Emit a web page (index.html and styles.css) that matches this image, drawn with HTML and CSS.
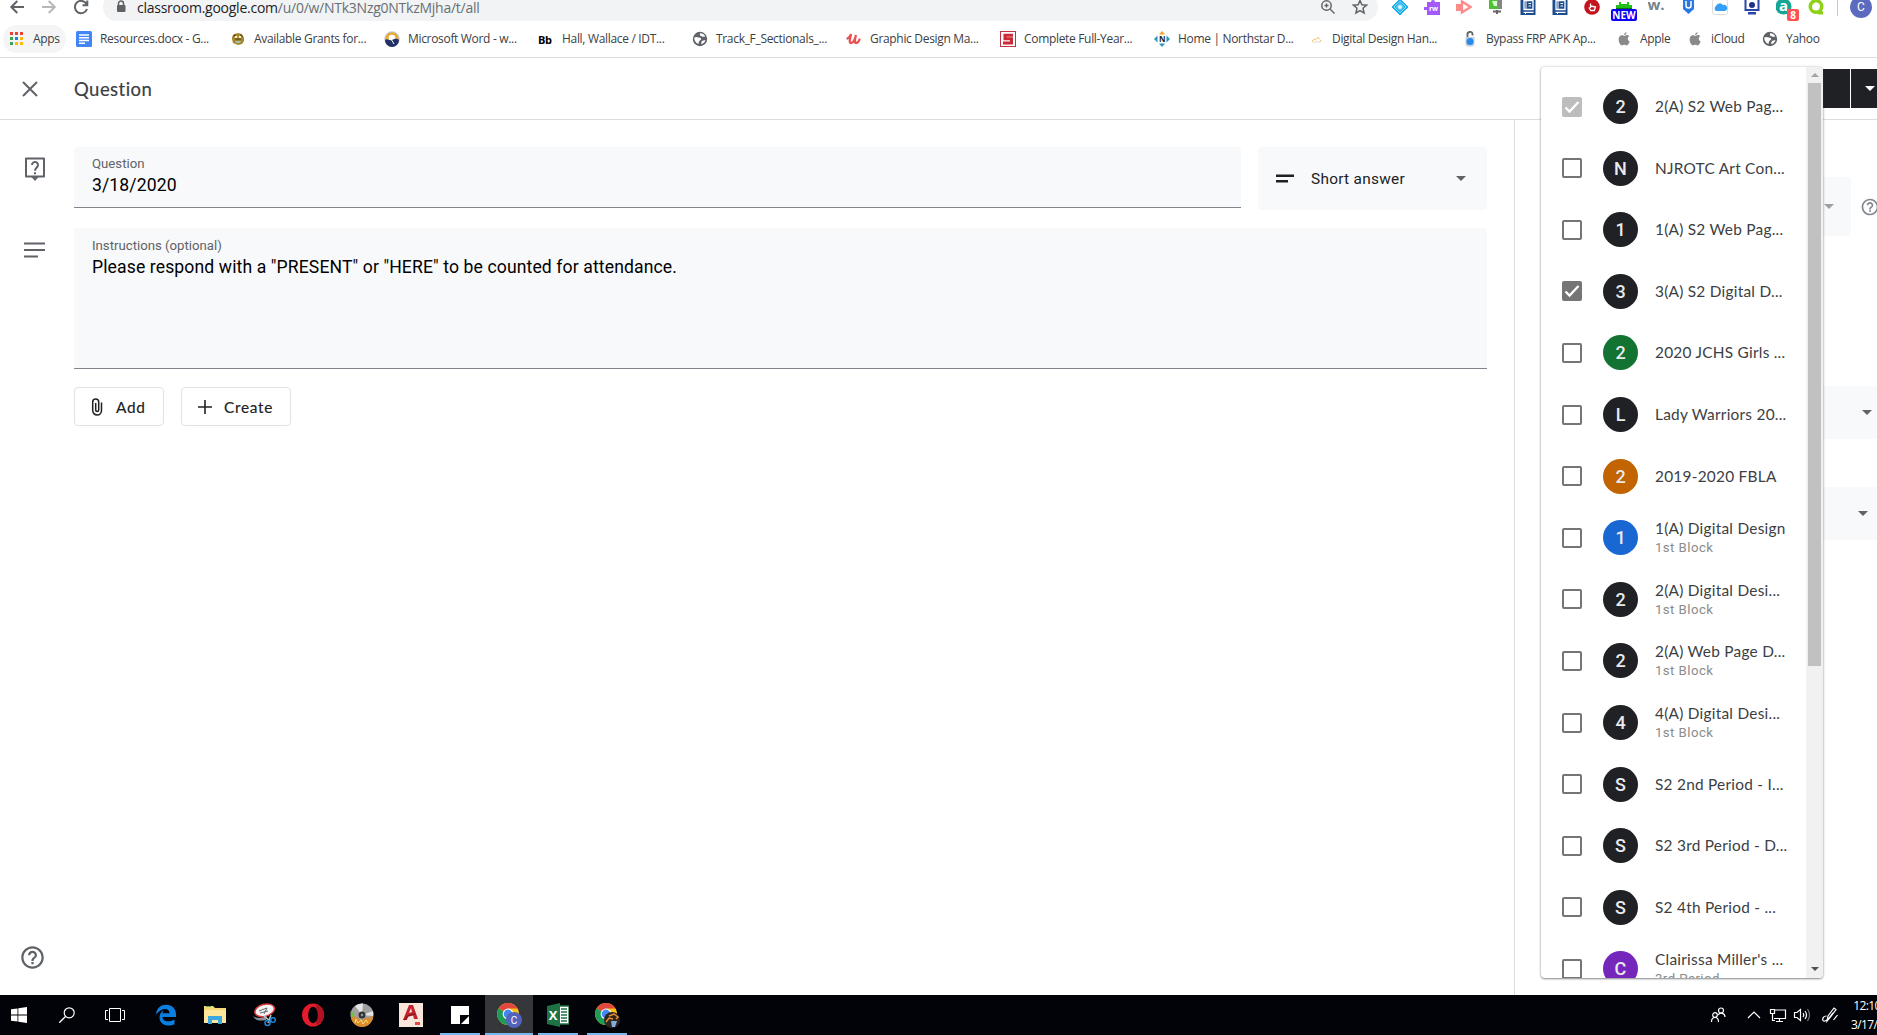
FILE: index.html
```html
<!DOCTYPE html>
<html lang="en">
<head>
  <meta charset="UTF-8">
  <meta name="viewport" content="width=device-width, initial-scale=1.0">
  <title>Question</title>
  <link rel="stylesheet" href="styles.css">
</head>
<body>

  <!-- Shared symbols -->
  <svg class="defs" width="0" height="0">
    <symbol id="globe" viewBox="0 0 16 16"><circle cx="8" cy="8" r="7.2" fill="#5f6368"/><path d="M2.300 6.500C4 5.500 5.500 6 6.500 6.500c1.500-.2 3 .5 2.500 2-.5 1-1.800 1-2 2l-.5 2.500C3.500 12 2 9 2.300 6.500zM8 2.200c-.5 1.500.2 2.800 1.700 3 1 .6 2.300.8 3.500.2C12.300 3.400 10.500 2.200 8 2.200zM10 10c1-.8 2.600-.9 3.500-.7-.6 2-2 3.200-4 3.900-.4-1.200-.3-2.500.5-3.200z" fill="#fff"/></symbol>
    <symbol id="apple" viewBox="0 0 16 16"><path d="M10.600 1.200c.1 1.500-1.200 2.800-2.600 2.800-.1-1.400 1.200-2.700 2.600-2.800zM8.200 4.900c.6 0 1.400-.8 2.700-.8 1 0 1.800.5 2.300 1.200-2.200 1.400-1.700 4.400.5 5.300-.6 1.700-1.800 3.800-3.100 3.800-.9 0-1.200-.6-2.300-.6-1.100 0-1.500.6-2.300.6C4.400 14.400 2.600 11.300 2.600 8.500c0-2.800 1.700-4.300 3.300-4.300 1.100 0 1.800.7 2.300.7z" fill="#8a8a8a"/></symbol>
    <symbol id="book" viewBox="0 0 16 16"><rect x=".5" width="15" height="16" fill="#1d4c8f"/><path d="M4 1.500h9v9H4zM3.500 13.300h10" fill="none" stroke="#fff" stroke-width="1.300"/><path d="M6 2v8.500M8.500 4.500h2.500M8.500 7h2.500M5.500 13v2" stroke="#fff"/></symbol>
    <symbol id="chrome" viewBox="0 0 24 24"><circle cx="12" cy="12" r="11" fill="#fbc116"/><path d="M12 12 2.500 6.500A11 11 0 0 1 21.500 6.500H12z" fill="#e2483d"/><path d="M2.500 6.500A11 11 0 0 0 12 23l5-8.500-5-2.500z" fill="#1e9b57"/><circle cx="12" cy="12" r="5.400" fill="#fff"/><circle cx="12" cy="12" r="4.400" fill="#4688f1"/></symbol>
    <symbol id="help" viewBox="0 0 24 24"><path d="M11 18h2v-2h-2v2zm1-16C6.480 2 2 6.480 2 12s4.480 10 10 10 10-4.480 10-10S17.520 2 12 2zm0 18c-4.410 0-8-3.590-8-8s3.590-8 8-8 8 3.590 8 8-3.590 8-8 8zm0-14c-2.210 0-4 1.790-4 4h2c0-1.100.9-2 2-2s2 .9 2 2c0 2-3 1.750-3 5h2c0-2.250 3-2.500 3-5 0-2.210-1.790-4-4-4z"/></symbol>
  </svg>

  <!-- Browser -->
  <div class="browser">
    <div class="toolbar">
      <div class="nav">
        <svg viewBox="0 0 16 16" width="16" height="16"><path d="M15 8H2.500M8.300 2 2.300 8l6 6" class="line"/></svg>
        <svg viewBox="0 0 16 16" width="16" height="16" class="dim"><path d="M1 8h12.500M7.700 2l6 6-6 6" class="line"/></svg>
        <svg viewBox="0 0 16 16" width="16" height="16"><path d="M13.500 5A6.200 6.200 0 1 0 14 10M14.300 1.500V6.300H9.500" class="line"/></svg>
      </div>
      <div class="omnibox">
        <svg viewBox="0 0 10 14" width="10" height="14"><path d="M2.500 6V3.500a2.500 2.500 0 0 1 5 0V6" fill="none" stroke="#5f6368" stroke-width="1.500"/><rect x="1" y="5" width="8.500" height="7" rx="1" fill="#5f6368"/></svg>
        <span class="url"><b>classroom.google.com</b>/u/0/w/NTk3Nzg0NTkzMjha/t/all</span>
        <svg viewBox="0 0 16 16" width="16" height="16"><circle cx="6.500" cy="6.500" r="4.700" fill="none" stroke="#5f6368" stroke-width="1.500"/><path d="M10 10l4.500 4.500M6.500 4.500v4M4.500 6.500h4" stroke="#5f6368" stroke-width="1.400"/></svg>
        <svg viewBox="0 0 16 16" width="16" height="16"><path d="M8 1.500l1.900 4.300 4.700.4-3.600 3.100 1.100 4.600L8 11.500l-4.100 2.400L5 9.300 1.400 6.200l4.700-.4z" fill="none" stroke="#5f6368" stroke-width="1.500"/></svg>
      </div>
      <div class="extensions">
        <svg viewBox="0 0 16 16"><path d="M8 0l8 8-8 8-8-8z" fill="#18aeea" stroke="#18aeea" stroke-linejoin="round"/><path d="M8 2 14 8 8 14 2 8zM8 4.500 11.500 8 8 11.500 4.500 8z" fill="none" stroke="#a8e4fa" stroke-width=".8"/><circle cx="8" cy="8" r="2" fill="#e4f7ff"/></svg>
        <svg viewBox="0 0 16 16"><path d="M3 3h4a2 2 0 1 1 4 0h5v13H3v-5H0V8h3z" fill="#a259f7"/><text x="9.500" y="12" class="g7">rw</text></svg>
        <svg viewBox="0 0 16 16"><path d="M0 5h5v7H0z" fill="#ff8a8a"/><path d="M6 2.500 14.500 8 6 13.500z" fill="none" stroke="#ff8a8a" stroke-width="2.300"/></svg>
        <svg viewBox="0 0 16 16"><path d="M10 0h4v10h-4z" fill="#858585"/><path d="M1 1h9v9H1z" fill="#4fc231"/><path d="M4 2h5v5H6z" fill="#d8ffcf"/><path d="M9 11v4M5 12.500h8" stroke="#666" stroke-width="2"/></svg>
        <svg><use href="#book"/></svg>
        <svg><use href="#book"/></svg>
        <svg viewBox="0 0 16 16"><circle cx="8" cy="8" r="7.800" fill="#c4121f"/><path d="M6.500 9V4.500M4.800 8.500l2 3h3.500l1.200-3.500-4.500-1" fill="none" stroke="#fff" stroke-width="1.300"/></svg>
        <span class="ext"><svg viewBox="0 0 16 16"><path d="M0 6h16v4H0zM3 3h10v4H3z" fill="#20c018"/><path d="M5 3h6v2H5z" fill="#fff"/><path d="M0 9.500h16" stroke="#126c12"/></svg><em class="badge-new">NEW</em></span>
        <svg viewBox="0 0 16 16"><text x="8" y="11" class="wdot">w.</text></svg>
        <svg viewBox="0 0 16 16"><path d="M3 0h11v10l-5.500 5L3 10z" fill="#2879e5"/><path d="M6 2v4.500a2.500 2.500 0 0 0 5 0V2" fill="none" stroke="#fff" stroke-width="1.500"/></svg>
        <svg viewBox="0 0 16 16"><rect x=".5" y=".5" width="15" height="15" rx="2" fill="#fff" stroke="#ddd"/><path d="M4 12a3 3 0 0 1 0-5 4 4 0 0 1 7-1 3 3 0 0 1 2 6z" fill="#35a0f5"/></svg>
        <svg viewBox="0 0 16 16"><path d="M1.500 0h13v11h-13z" fill="#fff" stroke="#2c45a8" stroke-width="2"/><circle cx="8" cy="6" r="3" fill="#1f318b"/><path d="M4 13h8v2.500H4z" fill="#2c45a8"/></svg>
        <span class="ext"><svg viewBox="0 0 16 16"><circle cx="7.500" cy="7.500" r="8" fill="#15a594"/><text x="7.500" y="12" class="asmall">a</text></svg><em class="badge-red">8</em></span>
        <svg viewBox="0 0 16 16"><circle cx="8" cy="7.500" r="5.700" fill="none" stroke="#8fd119" stroke-width="3.600"/><path d="M10 12h5v3.500h-5z" fill="#8fd119"/></svg>
        <i class="divider"></i>
        <span class="profile">C</span>
      </div>
    </div>

    <div class="bookmarks">
      <div class="apps">
        <svg viewBox="0 0 14 14" width="14" height="14"><path d="M0 0h3v3H0zM5 0h3v3H5zM10 0h3v3h-3z" fill="#ea4335"/><path d="M0 5h3v3H0zM0 10h3v3H0z" fill="#34a853"/><path d="M5 5h3v3H5z" fill="#1a82e8"/><path d="M10 5h3v3h-3zM5 10h3v3H5zM10 10h3v3h-3z" fill="#fbbc04"/></svg>
        <span>Apps</span>
      </div>
      <div class="bookmark"><svg viewBox="0 0 16 16"><rect width="16" height="16" rx="1.500" fill="#4285f4"/><path d="M3 4h10M3 6.800h10M3 9.500h10M3 12.200h6" stroke="#fff" stroke-width="1.400"/></svg><span>Resources.docx - G...</span></div>
      <div class="bookmark"><svg viewBox="0 0 16 16"><path d="M2 6l2-3 4-1 4 1 2 4 0 3-2 3-4 1-5-2-1-4z" fill="#a5852d"/><circle cx="6" cy="6" r="1.300" fill="#fff3b5"/><circle cx="10" cy="6" r="1.300" fill="#fff3b5"/><path d="M5 10h6l-1 2H6z" fill="#9bc5a5"/><path d="M3 5l3-1M10 4l3 2M5 8h6" stroke="#4c3914"/></svg><span>Available Grants for...</span></div>
      <div class="bookmark"><svg viewBox="0 0 16 16"><circle cx="8" cy="8" r="7.200" fill="#e5ac38" stroke="#c3c6d9"/><circle cx="8" cy="7" r="3.300" fill="#fff"/><path d="M1 9c2-2 4 1 7 0s4-2 7 0a7 7 0 0 1-14 0z" fill="#213069"/><path d="M7 8l3 5" stroke="#fff"/></svg><span>Microsoft Word - w...</span></div>
      <div class="bookmark"><i class="bb">Bb</i><span>Hall, Wallace / IDT...</span></div>
      <div class="bookmark"><svg><use href="#globe"/></svg><span>Track_F_Sectionals_...</span></div>
      <div class="bookmark"><svg viewBox="0 0 16 16"><path d="M1.500 7.500C4 6 5 3 5 3c-.5 3-2.500 9 0 9 3 0 5-8 5-8s-2.500 8 0 8c1.500 0 3-2 3.500-3.500" fill="none" stroke="#ec5252" stroke-width="2.300" stroke-linecap="round"/></svg><span>Graphic Design Ma...</span></div>
      <div class="bookmark"><svg viewBox="0 0 16 16"><rect x=".5" y=".5" width="15" height="15" fill="#fff" stroke="#bd3542"/><path d="M13 4.200H5v3.600h6.500v4.200H3" fill="none" stroke="#cc2936" stroke-width="3"/></svg><span>Complete Full-Year...</span></div>
      <div class="bookmark"><svg viewBox="0 0 16 16"><path d="M5 3.500 8 0l3 3.500z" fill="#f6a01c"/><path d="M5 12.500 8 16l3-3.500zM3.500 4.500v7L0 8zM12.500 4.500v7L16 8z" fill="#2598b7"/><text x="8" y="11.300" class="north">N</text></svg><span>Home | Northstar D...</span></div>
      <div class="bookmark"><svg viewBox="0 0 16 16"><path d="M4 10l2-2 2 1 2-3 3 4" fill="none" stroke="#f3b14a" stroke-dasharray="2 1"/><path d="M4 11h9" stroke="#dfd9c5"/></svg><span>Digital Design Han...</span></div>
      <div class="bookmark"><svg viewBox="0 0 16 16"><path d="M5.500 7V4a2.500 2.500 0 0 1 5-1V4.500" fill="none" stroke="#606366" stroke-width="1.800"/><path d="M3.500 6h9v8l-2 1.500h-5l-2-1.500z" fill="#c7cfd7"/><circle cx="8" cy="10.500" r="3.500" fill="#258bea"/></svg><span>Bypass FRP APK Ap...</span></div>
      <div class="bookmark short"><svg><use href="#apple"/></svg><span>Apple</span></div>
      <div class="bookmark icloud"><svg><use href="#apple"/></svg><span>iCloud</span></div>
      <div class="bookmark short"><svg><use href="#globe"/></svg><span>Yahoo</span></div>
    </div>
  </div>

  <!-- Header -->
  <header>
    <svg viewBox="0 0 16 16" width="16" height="16"><path d="M1 1l14 14M15 1 1 15" stroke="#5f6368" stroke-width="2"/></svg>
    <h1>Question</h1>
    <div class="ask"><span class="ask-main"></span><span class="ask-more"><i class="arrow white"></i></span></div>
  </header>

  <main>
    <!-- Question form -->
    <section class="editor">
      <div class="row">
        <svg class="row-icon tall" viewBox="0 0 24 26" width="24" height="26"><path d="M3 2.500h18v18H3z" fill="none" stroke="#5f6368" stroke-width="2" stroke-linejoin="round"/><path d="M8.500 21h7L12 25z" fill="#5f6368"/><path d="M9 9a3 3 0 1 1 5.200 2C13 12.300 12 12.800 12 14.800M12 16.200v2" fill="none" stroke="#5f6368" stroke-width="2"/></svg>
        <div class="field title">
          <label>Question</label>
          <p>3/18/2020</p>
        </div>
        <div class="type">
          <svg viewBox="0 0 18 10" width="18" height="10"><path d="M0 1.800h18M0 7.300h12" stroke="#202124" stroke-width="2.400"/></svg>
          <span>Short answer</span>
          <i class="arrow"></i>
        </div>
      </div>
      <div class="row">
        <svg class="row-icon" viewBox="0 0 22 16" width="22" height="16"><path d="M1 1.500h21M1 8h21M1 14.500h14" stroke="#5f6368" stroke-width="2.200"/></svg>
        <div class="field instructions">
          <label>Instructions (optional)</label>
          <p>Please respond with a "PRESENT" or "HERE" to be counted for attendance.</p>
        </div>
      </div>
      <div class="actions">
        <button class="btn"><svg viewBox="0 0 12 18" width="12" height="18"><path d="M10.500 4.500v8a4.400 4.400 0 0 1-8.800 0V4a3 3 0 0 1 6 0v8a1.500 1.500 0 0 1-3 0V5" fill="none" stroke="#202124" stroke-width="1.500"/></svg>Add</button>
        <button class="btn create"><svg viewBox="0 0 14 14" width="14" height="14"><path d="M7 0v14M0 7h14" stroke="#202124" stroke-width="1.600"/></svg>Create</button>
      </div>
      <svg class="help" width="27" height="27"><use href="#help"/></svg>
    </section>

    <!-- Settings column, mostly behind the class menu -->
    <aside>
      <div class="setting-row"><div class="setting first"><i class="arrow light"></i></div><svg class="hint" width="20" height="20"><use href="#help"/></svg></div>
      <div class="setting points"><i class="arrow"></i></div>
      <div class="setting due"><i class="arrow"></i></div>
    </aside>
  </main>

  <!-- Class menu -->
  <div class="menu">
    <ul id="classes"></ul>
    <div class="scrollbar"><i class="up"></i><div class="thumb"></div><i class="down"></i></div>
  </div>

  <!-- Taskbar -->
  <footer>
    <div class="tasks">
      <div><svg viewBox="0 0 16 16" width="16" height="16"><path d="M0 2.300 6.500 1.400v6.200H0zM7.300 1.200 16 0v7.600H7.300zM0 8.400h6.500v6.200L0 13.700zM7.300 8.400H16V16l-8.700-1.200z" fill="#fff"/></svg></div>
      <i></i>
      <div><svg viewBox="0 0 16 16" width="16" height="16"><circle cx="10.200" cy="5.800" r="5" fill="none" stroke="#fff" stroke-width="1.200"/><path d="M6.500 9.500.3 15.700" stroke="#fff" stroke-width="1.300"/></svg></div>
      <div><svg viewBox="0 0 20 14" width="20" height="14"><path d="M4.500.5h11v13h-11zM3 2.500H.5v9H3M17 2.500h2.500v9H17" fill="none" stroke="#fff"/></svg></div>
      <i></i>
      <div><svg viewBox="0 0 22 22" width="22" height="22"><path d="M1 10.500C1.500 4 6 .8 11 .8c6 0 10 4 10 9.600V13H7.500c0 5 7 5.500 12 2.500v4.700c-5.500 2.500-15 1.700-15-7 0-3.200 1.800-5.700 4.500-7.200C8 7 7.600 8.200 7.500 9.200h7C14.500 3 6 3.500 1 10.500z" fill="#0b7fe0"/></svg></div>
      <div><svg viewBox="0 0 22 20" width="22" height="20"><path d="M0 1h9l2 2h11v15H0z" fill="#f8d775"/><path d="M2 1h5v1H2z" fill="#4db35d"/><path d="M0 5h22v13H0z" fill="#fde699"/><path d="M4 19v-8h14v8h-4v-4H8v4z" fill="#3ba9e0"/></svg></div>
      <div><svg viewBox="0 0 24 24" width="24" height="24"><path d="M1 13c3 3 10 2 14 0l-1 4c-5 1-11 1-13-4z" fill="#8c9196"/><ellipse cx="12.800" cy="7.500" rx="10" ry="6" transform="rotate(-15 12 8)" fill="#f5f5f5" stroke="#d93a3a" stroke-width="1.500"/><path d="M7 8l8-3-3 6M8 10l8-2" fill="none" stroke="#666"/><path d="M12 13l7 6M19 12l-3 8" stroke="#b9c7d0" stroke-width="1.500"/><circle cx="15.500" cy="20" r="2.500" fill="none" stroke="#2084d4" stroke-width="1.500"/><circle cx="21" cy="17" r="2.300" fill="none" stroke="#2084d4" stroke-width="1.500"/></svg></div>
      <div><svg viewBox="0 0 24 24" width="24" height="24"><ellipse cx="12" cy="12" rx="11" ry="11.500" fill="#e31b2b"/><path d="M15 2c11 4 11 16 0 20z" fill="#b01220"/><ellipse cx="12" cy="12" rx="4.800" ry="8.300" fill="#010308"/></svg></div>
      <div><svg viewBox="0 0 24 24" width="24" height="24"><circle cx="12" cy="12" r="11.500" fill="#a0a0a0"/><path d="M12 12 5 3a12 12 0 0 1 8-2.500zM12 12l11-4a12 12 0 0 1 0 5z" fill="#e4e4e4"/><path d="M1 13c3 2 3-1 5 1s3 2 6 3c3 0 3-3 5-2s4-2 6-2a11 11 0 0 1-22 0z" fill="#d98d2c"/><path d="M5 20l1-4 2 4 3-3 2 4 3-4 2 3" fill="none" stroke="#ffe27a"/><path d="M.5 8l4 3-3 4z" fill="#69c62b"/><circle cx="12" cy="12" r="3.500" fill="#353535"/><circle cx="12" cy="12" r="1.200" fill="#999"/></svg></div>
      <div><svg viewBox="0 0 24 24" width="24" height="24"><path d="M0 0h24v24H0z" fill="#fae5dd"/><path d="M4 17 10 2h4l5 14h-4l-1-4-5 1-1 4z" fill="#c2242c"/><path d="M10 10l2-5 1 4z" fill="#fae5dd"/><path d="M5 17l4-4 7-2" fill="none" stroke="#8e1018" stroke-width="1.500"/><path d="M16 19h5v3h-5z" fill="#e44747"/></svg></div>
      <div class="running"><svg viewBox="0 0 18 18" width="18" height="18"><path d="M0 0h18v9h-9v9H0z" fill="#fff"/><path d="M18 9v9H9z" fill="#02040a"/><path d="M10 18h8v-8z" fill="#fff"/><path d="M9 9h9l-9 9z" fill="#02040a"/></svg></div>
      <div class="running current"><svg viewBox="0 0 26 26" width="26" height="26"><use href="#chrome" width="24" height="24"/><circle cx="18" cy="18" r="8" fill="#5363bb"/><text x="18" y="21.500" class="chromec">C</text></svg></div>
      <div class="running"><svg viewBox="0 0 22 24" width="22" height="24"><path d="M11 3h11v18H11z" fill="#fff" stroke="#1f7244" stroke-width="1.300"/><path d="M14 6h6M14 9h6M14 12h6M14 15h6M14 18h6" stroke="#1f7244" stroke-width="1.700"/><path d="M0 3 13 0v24L0 21z" fill="#1f7244"/><text x="6.200" y="16.500" class="excel">X</text></svg></div>
      <div class="running"><svg viewBox="0 0 26 26" width="26" height="26"><use href="#chrome" width="24" height="24"/><circle cx="18" cy="18" r="8" fill="#2c2622"/><path d="M15 14l5-2 4 3-2 2M12 20l3-4 4 1" fill="none" stroke="#e88d31" stroke-width="1.500"/><path d="M17 19h6l-2 6h-3z" fill="#86abd8"/></svg></div>
    </div>
    <div class="tray">
      <svg viewBox="0 0 16 16"><circle cx="11" cy="3.500" r="2.500"/><circle cx="5" cy="8" r="2.300"/><path d="M1.500 15c0-6 7-6 7 0M8 8c2-3 7-2 7 2"/></svg>
      <svg viewBox="0 0 16 16" class="caret"><path d="M2 11l6-6 6 6"/></svg>
      <svg viewBox="0 0 16 16"><path d="M4 3h11.500v8.500H4M9.500 11.500V14M6 14.500h7M.5 2.500h4v4h-4zM2.500 6.500v7H5"/></svg>
      <svg viewBox="0 0 16 16" class="speaker"><path d="M.5 5.500H3l3.500-3v11L3 10.500H.5zM9 6q1.500 2 0 4M11 4q3 4 0 8"/><path d="M13.500 2q4 6 0 12" opacity=".45"/></svg>
      <svg viewBox="0 0 16 16"><path d="M5 14 6 9l6-8 2 1.500-6 8zM4.500 9C0 9-.5 15 3 14c4-1 5-5 8-8M15.500 8l-4 5"/></svg>
      <div class="clock">12:10 PM<br>3/17/2020</div>
    </div>
  </footer>

  <script>
    const classes = [
      ["2", "2(A) S2 Web Pag...", "", "#202124", "locked"],
      ["N", "NJROTC Art Con..."],
      ["1", "1(A) S2 Web Pag..."],
      ["3", "3(A) S2 Digital D...", "", "#202124", "checked"],
      ["2", "2020 JCHS Girls ...", "", "#137333"],
      ["L", "Lady Warriors 20..."],
      ["2", "2019-2020 FBLA", "", "#c26401"],
      ["1", "1(A) Digital Design", "1st Block", "#1967d2"],
      ["2", "2(A) Digital Desi...", "1st Block"],
      ["2", "2(A) Web Page D...", "1st Block"],
      ["4", "4(A) Digital Desi...", "1st Block"],
      ["S", "S2 2nd Period - I..."],
      ["S", "S2 3rd Period - D..."],
      ["S", "S2 4th Period - ..."],
      ["C", "Clairissa Miller's ...", "3rd Period", "#7627bb"]
    ];

    const tick = '<svg viewBox="0 0 20 20"><path d="M3.500 10.500l4 4 9-9.500" fill="none" stroke="#fff" stroke-width="2.300"/></svg>';

    document.getElementById('classes').innerHTML = classes.map(([letter, name, section, color, state]) => `
      <li>
        <span class="check ${state || ''}">${state ? tick : ''}</span>
        <span class="avatar" style="background:${color || '#202124'}">${letter}</span>
        <div class="name">${name}${section ? `<small>${section}</small>` : ''}</div>
      </li>`).join('');
  </script>

</body>
</html>
```

FILE: styles.css
```css
* { margin: 0; padding: 0; box-sizing: border-box; }

body {
  width: 1877px;
  height: 1035px;
  overflow: hidden;
  display: flex;
  flex-direction: column;
  position: relative;
  background: #fff;
  color: #202124;
  font-family: Roboto, sans-serif;
}

svg { flex: none; display: block; }
.defs { position: absolute; }

/* Browser */
.browser {
  height: 58px;
  flex: none;
  overflow: hidden;
  border-bottom: 1px solid #dadcde;
  font-family: "Open Sans", sans-serif;
}

.toolbar {
  height: 28px;
  margin-top: -7px;
  display: flex;
  align-items: center;
}

.nav {
  width: 103px;
  padding-left: 9px;
  display: flex;
  gap: 16px;
}

.line { fill: none; stroke: #5f6368; stroke-width: 2; }
.dim { opacity: .45; }

.omnibox {
  width: 1275px;
  height: 28px;
  padding: 0 10px 0 13px;
  border-radius: 14px;
  background: #f1f3f4;
  display: flex;
  align-items: center;
  gap: 16px;
}

.omnibox > svg:first-child { margin-right: -5px; }

.url {
  flex: 1;
  font-size: 14px;
  letter-spacing: -.25px;
  color: #6b6f73;
}

.url b { font-weight: 400; color: #202124; }

.extensions {
  display: flex;
  align-items: center;
  gap: 16px;
  padding-left: 14px;
}

.extensions svg { width: 16px; height: 16px; }
.ext { position: relative; }

.badge-new, .badge-red {
  position: absolute;
  font: bold 10px/12px "Open Sans", sans-serif;
  color: #fff;
  text-align: center;
  border-radius: 2px;
}

.badge-new { left: -5px; top: 10px; width: 26px; background: #0b00f5; }
.badge-red { left: 11px; top: 10px; width: 12px; background: #ff5252; }

.g7 { font: bold 7px "Open Sans", sans-serif; fill: #fff; text-anchor: middle; }
.wdot { font: bold 15px "Open Sans", sans-serif; fill: #74838c; text-anchor: middle; }
.asmall { font: bold 15px "Open Sans", sans-serif; fill: #fff; text-anchor: middle; }
.north { font: bold 8px "Open Sans", sans-serif; fill: #222; text-anchor: middle; }

.divider { width: 1px; height: 18px; background: #c8c9cc; margin-left: -3px; }

.profile {
  width: 22px;
  height: 22px;
  border-radius: 50%;
  background: #5c6bc0;
  color: #fff;
  font: 12px/22px Roboto, sans-serif;
  text-align: center;
  margin-left: -4px;
}

.bookmarks {
  height: 36px;
  display: flex;
  align-items: center;
  padding-left: 3px;
  font-size: 12px;
  letter-spacing: -.32px;
  color: #3c4043;
}

.bookmarks span { margin-top: -1px; }

.apps {
  width: 63px;
  height: 28px;
  margin-right: 10px;
  padding-left: 7px;
  border-radius: 14px;
  background: #f5f5f5;
  display: flex;
  align-items: center;
  gap: 9px;
}

.bookmark {
  width: 154px;
  display: flex;
  align-items: center;
  gap: 8px;
  white-space: nowrap;
}

.bookmark svg { width: 16px; height: 16px; }
.bookmark.short { width: 71px; }
.bookmark.icloud { width: 75px; }

.bb {
  width: 16px;
  font: bold 11px "Open Sans", sans-serif;
  letter-spacing: -.3px;
  color: #000;
}

/* Header */
header {
  height: 62px;
  flex: none;
  display: flex;
  align-items: center;
  padding-left: 22px;
  border-bottom: 1px solid #dadce0;
}

h1 {
  flex: 1;
  margin-left: 36px;
  font: 400 18.5px Lato, sans-serif;
  letter-spacing: .45px;
  color: #3c4043;
  -webkit-text-stroke: .2px #3c4043;
}

.ask { display: flex; gap: 1px; height: 39px; }
.ask-main { width: 120px; background: #202124; }

.ask-more {
  width: 26px;
  padding-left: 14px;
  background: #202124;
  display: flex;
  align-items: center;
}

.arrow {
  flex: none;
  border: 5.5px solid transparent;
  border-top-color: #5f6368;
  border-bottom: 0;
}

.arrow.white { border-top-color: #fff; }
.arrow.light { border-top-color: #9aa0a6; }

/* Question form */
main { flex: 1; display: flex; min-height: 0; }

.editor {
  flex: none;
  width: 1514px;
  padding: 27px 27px 24px 0;
  display: flex;
  flex-direction: column;
}

.row { display: flex; margin-bottom: 18px; }
.row-icon { width: 22px; margin: 14px 29px 0 23px; }
.row-icon.tall { width: 24px; margin: 9px 27px 0 23px; }

.field {
  flex: 1;
  padding: 9px 18px 0;
  background: #f8f9fa;
  border-radius: 4px 4px 0 0;
  border-bottom: 1px solid #80868b;
}

.field.title { height: 61px; margin-right: 17px; }
.field.instructions { height: 141px; padding-top: 10px; }

.field label {
  display: block;
  font-size: 13.2px;
  line-height: 16px;
  color: #5f6368;
}

.field p {
  padding-top: 1px;
  font-size: 17.6px;
  line-height: 24px;
  letter-spacing: .11px;
  color: #000;
}

.type {
  width: 229px;
  height: 63px;
  padding: 0 21px 0 18px;
  border-radius: 4px;
  background: #f8f9fa;
  display: flex;
  align-items: center;
  font-size: 15.4px;
  letter-spacing: .28px;
}

.type span { flex: 1; margin-left: 17px; }

.actions {
  display: flex;
  gap: 17px;
  padding-left: 74px;
}

.btn {
  width: 90px;
  height: 39px;
  padding-left: 16px;
  border: 1px solid #e0e2e5;
  border-radius: 4px;
  background: #fff;
  color: #202124;
  display: flex;
  align-items: center;
  gap: 13px;
  font: 15.4px Lato, sans-serif;
  letter-spacing: .7px;
  -webkit-text-stroke: .15px #202124;
}

.btn.create { width: 110px; gap: 12px; }

.help { margin: auto 0 0 19px; fill: #5f6368; }

/* Settings */
aside {
  flex: 1;
  min-width: 0;
  border-left: 1px solid #dadce0;
  padding: 57px 0 0 26px;
}

.setting-row { display: flex; align-items: center; gap: 9px; }

.setting {
  flex: none;
  background: #f8f9fa;
  display: flex;
  align-items: center;
  justify-content: flex-end;
  height: 53px;
}

.setting.first { width: 310px; height: 59px; padding-right: 17px; border-radius: 4px; }
.setting.points { margin-top: 150px; padding-right: 5px; }
.setting.due { margin-top: 48px; padding-right: 9px; }
.hint { fill: #80868b; }

/* Class menu */
.menu {
  position: absolute;
  left: 1541px;
  top: 67px;
  width: 282px;
  height: 911px;
  display: flex;
  overflow: hidden;
  background: #fff;
  border-radius: 4px;
  box-shadow: 0 1px 2px rgba(60,64,67,.55), 0 0 3px rgba(60,64,67,.25);
}

.menu ul {
  flex: 1;
  list-style: none;
  padding-top: 8.8px;
}

.menu li {
  height: 61.6px;
  padding-left: 21px;
  display: flex;
  align-items: center;
}

.check {
  width: 20px;
  height: 20px;
  border: 2px solid #757575;
  border-radius: 2px;
}

.check.checked { background: #757575; border: 0; }
.check.locked { background: #bdbdbd; border: 0; }

.avatar {
  width: 35px;
  height: 35px;
  margin: 0 17px 0 21px;
  border-radius: 50%;
  color: #e8eaed;
  font: 500 18px/35px Roboto, sans-serif;
  text-align: center;
}

.name {
  margin-top: -1px;
  font: 15.4px/20px Lato, sans-serif;
  letter-spacing: .25px;
  color: #3c4043;
  white-space: nowrap;
}

.name small {
  display: block;
  font: 13.2px/20px Roboto, sans-serif;
  letter-spacing: .45px;
  color: #8b8b8b;
}

.name:has(small) { margin-top: 1px; }

.scrollbar {
  width: 17px;
  background: #f1f1f1;
  display: flex;
  flex-direction: column;
  align-items: center;
}

.scrollbar i { border: 4px solid transparent; }
.scrollbar .up { margin: 6px 0; border-top-width: 0; border-bottom-color: #a3a3a3; }
.scrollbar .down { margin: auto 0 7px; border-bottom-width: 0; border-top-color: #505050; }
.thumb { width: 13px; height: 583px; background: #c1c1c1; }

/* Taskbar */
footer {
  height: 40px;
  flex: none;
  display: flex;
  justify-content: space-between;
  background: #010308;
}

.tasks {
  display: grid;
  grid-template-columns: 38px 5px 48px 48px 2px repeat(10, 49px);
}

.tasks div {
  display: flex;
  align-items: center;
  justify-content: center;
}

.tasks .running { box-shadow: inset 0 -2px #76b9ed; margin: 0 4px 0 5px; }
.tasks .current { margin: 0 0 0 1px; background: #35373b; }

.chromec { font: 10px Roboto, sans-serif; fill: #fff; text-anchor: middle; }
.excel { font: bold 13px "Open Sans", sans-serif; fill: #fff; text-anchor: middle; }

.tray {
  width: 167px;
  display: flex;
  align-items: center;
  gap: 8px;
}

.tray svg { width: 16px; height: 16px; fill: none; stroke: #fff; stroke-width: 1.2; overflow: visible; }
.tray .caret { margin-left: 12px; }
.tray .speaker { margin-right: 4px; }

.clock {
  flex: none;
  margin-left: 5px;
  font: 12px/19px "Open Sans", sans-serif;
  letter-spacing: -.6px;
  color: #fff;
  text-align: center;
}
```
